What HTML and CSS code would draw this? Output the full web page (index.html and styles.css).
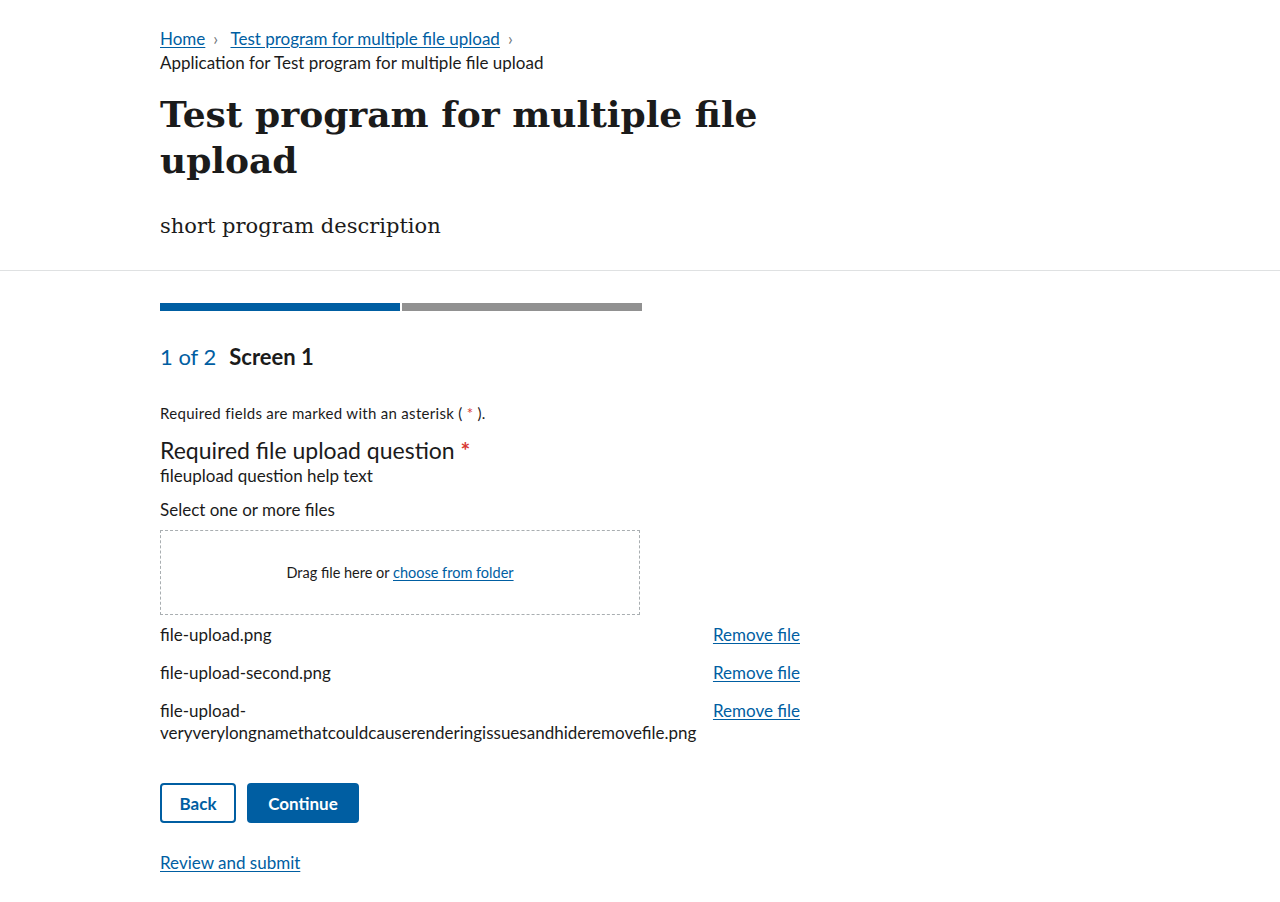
FILE: index.html
```html
<!DOCTYPE html>
<html lang="en">
<head>
<meta charset="utf-8">
<title>Test program for multiple file upload</title>
<link rel="stylesheet" href="styles.css">
</head>
<body>
<header class="hero">
  <div class="container">
    <nav class="breadcrumb" aria-label="Breadcrumbs">
      <ol class="crumbs">
        <li class="crumb"><a href="#">Home</a><span class="chev">&#x203A;</span></li>
        <li class="crumb"><a href="#">Test program for multiple file upload</a><span class="chev">&#x203A;</span></li>
        <li class="crumb current">Application for Test program for multiple file upload</li>
      </ol>
    </nav>
    <h1 class="title">Test program for multiple file upload</h1>
    <p class="desc">short program description</p>
  </div>
</header>
<main class="container main">
  <div class="progress">
    <div class="seg seg-done"></div>
    <div class="seg seg-todo"></div>
  </div>
  <h2 class="step"><span class="step-count">1 of 2</span><span class="step-name">Screen 1</span></h2>
  <p class="req-note">Required fields are marked with an asterisk ( <span class="star-small">*</span> ).</p>
  <div class="question">
    <div class="q-label">Required file upload question <span class="star">*</span></div>
    <div class="q-help">fileupload question help text</div>
    <div class="select-label">Select one or more files</div>
    <div class="dropzone">Drag file here or&nbsp;<a href="#">choose from folder</a></div>
    <ul class="files">
      <li class="file-row"><span class="fname">file-upload.png</span><a href="#" class="remove">Remove file</a></li>
      <li class="file-row"><span class="fname">file-upload-second.png</span><a href="#" class="remove">Remove file</a></li>
      <li class="file-row"><span class="fname">file-upload-<br>veryverylongnamethatcouldcauserenderingissuesandhideremovefile.png</span><a href="#" class="remove">Remove file</a></li>
    </ul>
  </div>
  <div class="actions">
    <button class="btn btn-outline btn-back">Back</button>
    <button class="btn btn-primary btn-continue">Continue</button>
  </div>
  <a href="#" class="review">Review and submit</a>
</main>
</body>
</html>
```
FILE: styles.css
```css
* { box-sizing: border-box; }
body {
  margin: 0;
  font-family: "Lato", "Noto Sans", sans-serif;
  color: #1b1b1b;
  background: #fff;
}
a { color: #005ea2; text-decoration: underline; text-underline-offset: 2px; }
.container { width: 640px; margin-left: 160px; }
.hero { border-bottom: 1px solid #dfe1e2; padding-top: 27px; padding-bottom: 29px; }
.crumbs { list-style: none; margin: 0; padding: 0; font-size: 17px; line-height: 24px; }
.crumb { display: inline; }
.chev { color: #71767a; margin: 0 8px; font-size: 17px; }
.current { display: block; }
.title {
  font-family: "DejaVu Serif", "Liberation Serif", serif;
  font-weight: bold;
  font-size: 36px;
  line-height: 46px;
  margin: 16px 0 0;
  width: 640px;
}
.desc {
  font-family: "DejaVu Serif", "Liberation Serif", serif;
  font-size: 21px;
  line-height: 30px;
  margin: 28px 0 0;
}
.main { padding-top: 32px; padding-bottom: 30px; }
.progress { display: flex; gap: 2px; width: 482px; }
.seg { height: 8px; flex: 1; }
.seg-done { background: #005ea2; }
.seg-todo { background: #919191; }
.step { margin: 30px 0 0; font-size: 22px; line-height: 32px; font-weight: normal; display: flex; gap: 13px; }
.step-count { color: #005ea2; }
.step-name { font-weight: bold; }
.req-note { font-size: 15px; line-height: 22px; margin: 29px 0 0; letter-spacing: 0.3px; }
.star-small { color: #d83933; }
.question { margin-top: 12px; }
.q-label { font-size: 23px; line-height: 28px; }
.star { color: #d83933; font-weight: bold; }
.q-help { font-size: 17px; line-height: 24px; margin-top: 0; }
.select-label { font-size: 17px; line-height: 24px; margin-top: 10px; }
.dropzone {
  width: 480px; height: 85px; margin-top: 8px;
  border: 1px dashed #a9aeb1;
  display: flex; align-items: center; justify-content: center;
  font-size: 14.5px;
}
.files { list-style: none; margin: 9px 0 0; padding: 0; }
.file-row { display: flex; justify-content: space-between; align-items: flex-start; font-size: 17px; line-height: 22px; margin-bottom: 16px; }
.remove { flex: none; }
.actions { display: flex; gap: 11px; margin-top: 39px; }
.btn {
  font-family: inherit; font-weight: bold; font-size: 17px;
  height: 40px; border-radius: 4px; padding: 0; cursor: pointer;
}
.btn-back { width: 76px; }
.btn-continue { width: 112px; }
.btn-outline { background: #fff; color: #005ea2; border: 2px solid #005ea2; }
.btn-primary { background: #005ea2; color: #fff; border: 0; }
.review { display: inline-block; margin-top: 28px; font-size: 17px; line-height: 24px; }
```
